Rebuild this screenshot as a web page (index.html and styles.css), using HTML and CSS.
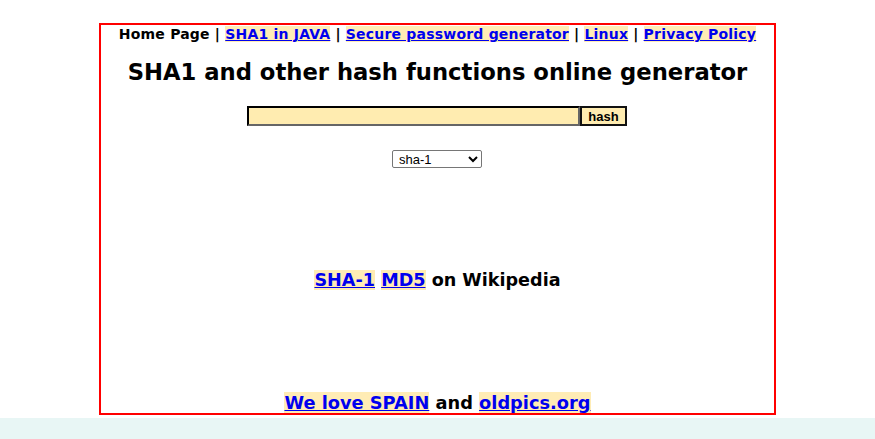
FILE: index.html
```html
<!DOCTYPE html>
<html lang="en">
<head>
<meta charset="utf-8">
<title>SHA1 and other hash functions online generator</title>
<link rel="stylesheet" href="styles.css">
</head>
<body>
<div class="box">
  <div class="nav">Home Page | <a href="#">SHA1 in JAVA</a> | <a href="#">Secure password generator</a> | <a href="#">Linux</a> | <a href="#">Privacy Policy</a></div>
  <h1 class="title">SHA1 and other hash functions online generator</h1>
  <form class="hashform">
    <div class="row"><input class="field" type="text"><button class="btn" type="button">hash</button></div>
    <div class="row sel-row"><select class="algo"><option>sha-1</option></select></div>
  </form>
  <div class="wiki"><a href="#">SHA-1</a> <a href="#">MD5</a> on Wikipedia</div>
  <div class="spain"><a href="#">We love SPAIN</a> and <a href="#">oldpics.org</a></div>
</div>
<div class="foot"></div>
</body>
</html>
```
FILE: styles.css
```css
html, body { margin: 0; padding: 0; background: #fff; }
body { font-family: "DejaVu Sans", Verdana, sans-serif; color: #000; }
.box {
  width: 673px;
  height: 388px;
  margin: 23px auto 0;
  border: 2px solid #ff0000;
  text-align: center;
  font-weight: bold;
}
a { color: #0000ee; text-decoration: underline; background: #ffecb5; }
.nav { font-size: 14px; line-height: 18px; letter-spacing: 0.2px; }
.title { font-size: 22.7px; line-height: 28px; margin: 15px 0 0; font-weight: bold; }
.hashform { margin: 20px 0 0; }
.row { display: flex; justify-content: center; }
.hashform .row:first-child { padding-right: 1px; }
.field {
  width: 333px; height: 20px; box-sizing: border-box; margin: 0;
  border: 2px inset #666; border-color: #222 #666 #666 #222;
  background: #ffecb0; padding: 0 4px; font-size: 13px;
}
.btn {
  width: 47px; height: 20px; box-sizing: border-box; margin: 0;
  border: 2px solid #111; background: #ffecb0; padding: 0;
  font-family: "Liberation Sans", Arial, sans-serif; font-size: 13px; font-weight: bold; color: #000;
}
.sel-row { margin-top: 24px; padding-right: 1px; }
.algo {
  width: 90px; height: 18px; box-sizing: border-box; margin: 0;
  font-family: "Liberation Sans", Arial, sans-serif; font-size: 13px;
  border: 1px solid #767676; border-radius: 2px; background: #fff; padding: 0 2px;
}
.wiki { font-size: 17.6px; line-height: 20px; margin-top: 102px; }
.spain { font-size: 17.8px; line-height: 20px; margin-top: 103px; }
.foot { height: 40px; margin-top: 3px; background: #e8f6f5; }
```
